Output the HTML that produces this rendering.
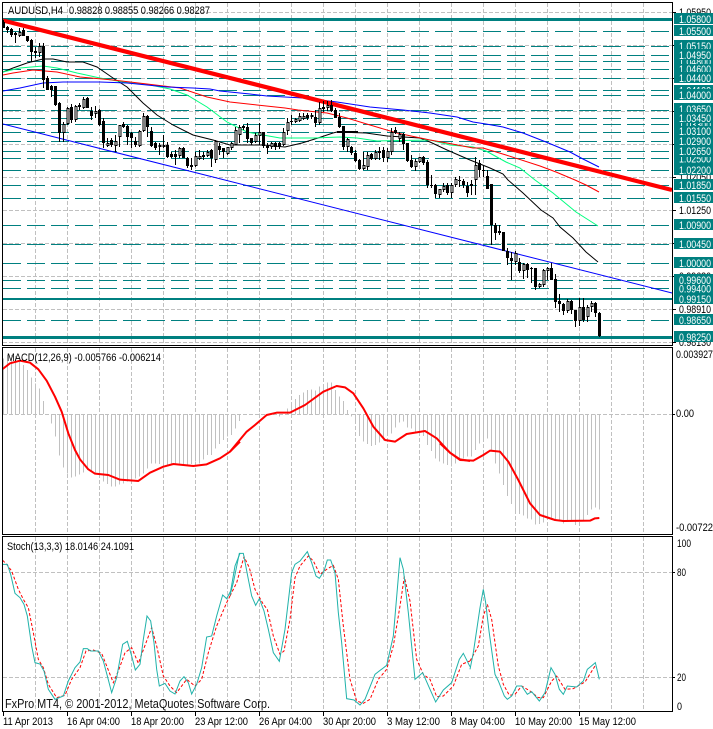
<!DOCTYPE html>
<html>
<head>
<meta charset="utf-8">
<title>AUDUSD,H4</title>
<style>
html,body{margin:0;padding:0;background:#fff;width:713px;height:729px;overflow:hidden}
svg{display:block}
text{font-family:"Liberation Sans",sans-serif;font-size:11px;fill:#000}
.g{stroke:#c0c0c0;stroke-width:1;stroke-dasharray:4 2;fill:none}
.t{stroke:#008080;stroke-width:1;stroke-dasharray:18 6;fill:none}
.l text{fill:#fff}
.l rect{fill:#008080}
</style>
</head>
<body>
<svg width="713" height="729" viewBox="0 0 713 729" xmlns="http://www.w3.org/2000/svg">
<rect width="713" height="729" fill="#fff"/>

<!-- grid -->
<g shape-rendering="crispEdges">
<path class="g" d="M35.5 3V345M67.5 3V345M99.5 3V345M131.5 3V345M163.5 3V345M195.5 3V345M227.5 3V345M259.5 3V345M291.5 3V345M323.5 3V345M355.5 3V345M387.5 3V345M419.5 3V345M451.5 3V345M483.5 3V345M515.5 3V345M547.5 3V345M579.5 3V345M611.5 3V345M643.5 3V345"/>
<path class="g" d="M3 12.5H672M3 45.5H672M3 78.5H672M3 111.5H672M3 144.5H672M3 177.5H672M3 210.5H672M3 243.5H672M3 276.5H672M3 309.5H672M3 342.5H672"/>
<path class="g" d="M35.5 348V534M67.5 348V534M99.5 348V534M131.5 348V534M163.5 348V534M195.5 348V534M227.5 348V534M259.5 348V534M291.5 348V534M323.5 348V534M355.5 348V534M387.5 348V534M419.5 348V534M451.5 348V534M483.5 348V534M515.5 348V534M547.5 348V534M579.5 348V534M611.5 348V534M643.5 348V534M3 414.5H672"/>
<path class="g" d="M35.5 537V712M67.5 537V712M99.5 537V712M131.5 537V712M163.5 537V712M195.5 537V712M227.5 537V712M259.5 537V712M291.5 537V712M323.5 537V712M355.5 537V712M387.5 537V712M419.5 537V712M451.5 537V712M483.5 537V712M515.5 537V712M547.5 537V712M579.5 537V712M611.5 537V712M643.5 537V712M3 572.5H672M3 677.5H672"/>
<!-- teal dashed levels -->
<path class="t" d="M3 31.5H672M3 46.5H672M3 55.5H672M3 61.5H672M3 69.5H672M3 78.5H672M3 90.5H672M3 95.5H672M3 110.5H672M3 118.5H672M3 124.5H672M3 132.5H672M3 141.5H672M3 151.5H672M3 158.5H672M3 170.5H672M3 185.5H672M3 198.5H672M3 225.5H672M3 244.5H672M3 263.5H672M3 280.5H672M3 288.5H672M3 320.5H672"/>
<rect x="3" y="18" width="669" height="3" fill="#008080"/>
<rect x="3" y="298" width="669" height="2" fill="#008080"/>
<rect x="3" y="336" width="669" height="3" fill="#008080"/>
</g>

<!-- moving averages -->
<g fill="none" stroke-width="1">
<polyline stroke="#000" points="3,72 13,68 27,63 43,59 53,59 67,62 83,62 97,67 113,78 127,87 143,103 157,115 173,125 193,135 213,140 230,145 263,145 285,147 302,143 318,138 333,133 337,132 366,133 387,136 420,138 430,142 447,150 470,160 490,168 503,174 508,180 523,193 541,210 553,218 560,227 573,238 586,252 598,262"/>
<polyline stroke="#000" stroke-width="2" points="337,132 358,132"/>
<polyline stroke="#00ff7f" points="3,72 20,68 43,66 57,68 77,73 100,78 123,82 150,85 170,89 187,95 207,107 227,122 247,132 263,135 280,138 313,138 340,137 357,138 377,141 430,140 450,145 473,147 486,151 506,162 520,168 535,180 553,193 576,212 598,226"/>
<polyline stroke="#f00" points="3,75 13,73 33,70 57,72 80,77 113,80 147,84 180,88 207,97 230,102 257,105 285,108 298,110 327,113 347,118 370,125 397,133 430,140 447,143 473,148 483,148 506,155 540,166 556,172 575,180 586,185 599,192"/>
<polyline stroke="#00f" points="3,91 20,88 43,83 63,82 100,82 127,83 167,87 193,88 210,89 220,91 250,94 267,96 303,98 337,102 370,107 403,110 430,113 457,117 473,122 486,124 503,127 523,133 546,142 570,152 583,159 599,167"/>
</g>

<!-- trend lines -->
<line x1="3" y1="124" x2="672" y2="293" stroke="#00f" stroke-width="1"/>
<line x1="3" y1="20.5" x2="672" y2="190" stroke="#f00" stroke-width="4.2"/>

<!-- candles -->
<g shape-rendering="crispEdges">
<path fill="none" stroke="#000" d="M3.5 20V28M7.5 26V33M11.5 28V37M15.5 32V43M19.5 28V37M23.5 28V36M27.5 36V42M31.5 39V62M35.5 47V58M39.5 43V57M43.5 43V88M47.5 76V90M51.5 85V97M55.5 86V106M59.5 102V142M63.5 122V142M67.5 107V125M71.5 104V123M75.5 105V122M79.5 103V110M83.5 97V109M87.5 97V108M91.5 107V120M95.5 106V118M99.5 109V126M103.5 118V148M107.5 138V147M111.5 138V147M115.5 135V152M119.5 125V147M123.5 122V128M127.5 125V145M131.5 132V148M135.5 137V147M139.5 130V147M143.5 113V132M147.5 115V137M151.5 127V147M155.5 142V150M159.5 143V155M163.5 135V148M167.5 142V158M171.5 152V158M175.5 150V165M179.5 147V158M183.5 147V158M187.5 157V168M191.5 158V170M195.5 152V167M199.5 150V160M203.5 152V160M207.5 150V157M211.5 149V167M215.5 140V163M219.5 143V155M223.5 148V158M227.5 147V155M231.5 142V150M235.5 127V145M239.5 125V143M243.5 125V130M247.5 123V143M251.5 138V145M255.5 133V143M259.5 123V145M263.5 132V148M267.5 143V154M271.5 142V149M275.5 142V150M279.5 142V149M283.5 128V146M287.5 118V135M291.5 115V125M295.5 118V123M299.5 113V122M303.5 113V120M307.5 113V120M311.5 113V119M315.5 110V127M319.5 102V125M323.5 101V112M327.5 101V111M331.5 100V112M335.5 108V118M339.5 113V128M343.5 126V150M347.5 138V152M351.5 146V155M355.5 150V162M359.5 159V170M363.5 152V170M367.5 152V170M371.5 153V160M375.5 150V160M379.5 147V160M383.5 147V162M387.5 148V162M391.5 128V155M395.5 127V134M399.5 132V142M403.5 133V150M407.5 143V162M411.5 155V168M415.5 159V171M419.5 157V163M423.5 156V165M427.5 160V188M431.5 175V188M435.5 184V198M439.5 189V198M443.5 183V192M447.5 183V195M451.5 183V198M455.5 177V187M459.5 176V187M463.5 179V188M467.5 182V197M471.5 180V195M475.5 157V195M479.5 160V177M483.5 165V177M487.5 170V189M491.5 184V245M495.5 223V240M499.5 225V235M503.5 232V251M507.5 248V265M511.5 252V280M515.5 251V265M519.5 258V273M523.5 263V279M527.5 263V278M531.5 267V283M535.5 268V290M539.5 283V288M543.5 269V287M547.5 267V280M551.5 263V280M555.5 274V308M559.5 294V312M563.5 303V315M567.5 299V313M571.5 300V314M575.5 310V327M579.5 298V326M583.5 298V322M587.5 305V322M591.5 301V312M595.5 302V317M599.5 312V337"/>
<path fill="none" stroke="#000" stroke-width="3" d="M3.5 22V28M7.5 27V30M11.5 29V35M15.5 33V35M23.5 30V36M27.5 36V41M31.5 40V52M35.5 51V53M43.5 46V80M47.5 78V90M51.5 86V90M55.5 86V105M59.5 103V133M71.5 107V120M79.5 105V107M87.5 98V108M91.5 111V116M99.5 110V125M103.5 121V143M111.5 140V145M123.5 124V127M127.5 126V137M131.5 133V138M135.5 141V145M147.5 116V127M151.5 131V146M155.5 143V148M167.5 145V157M171.5 154V157M175.5 154V157M183.5 148V158M187.5 158V166M191.5 165V167M203.5 155V157M211.5 150V158M219.5 146V150M223.5 148V152M243.5 126V128M247.5 127V139M251.5 138V143M263.5 132V146M267.5 146V148M275.5 143V147M279.5 143V147M291.5 121V122M307.5 115V118M315.5 117V123M323.5 107V109M331.5 105V111M335.5 110V118M339.5 117V127M343.5 126V147M351.5 147V153M355.5 153V161M359.5 160V169M371.5 154V159M379.5 151V153M383.5 150V158M395.5 130V133M403.5 134V144M407.5 143V161M411.5 160V167M423.5 157V163M427.5 162V185M431.5 185V186M435.5 185V194M447.5 185V193M459.5 180V181M463.5 181V185M467.5 186V193M471.5 184V186M479.5 163V170M483.5 170V171M487.5 176V189M491.5 184V225M495.5 225V233M499.5 231V233M503.5 232V251M507.5 251V258M511.5 258V261M519.5 262V271M527.5 264V270M531.5 268V269M535.5 268V287M551.5 268V280M555.5 279V302M559.5 301V304M563.5 304V311M571.5 301V310M575.5 310V321M583.5 307V320M595.5 303V313M599.5 313V336"/>
<path fill="#fff" stroke="#000" d="M19 32.5h2v3h-2zM39 46.5h2v6h-2zM63 124.5h2v8h-2zM67 108.5h2v15h-2zM75 106.5h2v13h-2zM83 99.5h2v8h-2zM95 111.5h2v2h-2zM107 143.5h2v2h-2zM115 141.5h2v4h-2zM119 125.5h2v11h-2zM139 131.5h2v14h-2zM143 116.5h2v14h-2zM159 145.5h2v1h-2zM163 145.5h2v1h-2zM179 148.5h2v7h-2zM195 156.5h2v9h-2zM199 156.5h2v2h-2zM207 152.5h2v3h-2zM215 141.5h2v18h-2zM227 147.5h2v6h-2zM231 143.5h2v4h-2zM235 130.5h2v14h-2zM239 127.5h2v7h-2zM255 135.5h2v6h-2zM259 132.5h2v3h-2zM271 143.5h2v3h-2zM283 132.5h2v12h-2zM287 122.5h2v8h-2zM295 119.5h2v2h-2zM299 116.5h2v4h-2zM303 116.5h2v2h-2zM311 115.5h2v1h-2zM319 108.5h2v14h-2zM327 105.5h2v2h-2zM347 139.5h2v7h-2zM363 165.5h2v3h-2zM367 155.5h2v11h-2zM375 152.5h2v6h-2zM387 151.5h2v6h-2zM391 132.5h2v19h-2zM399 134.5h2v4h-2zM415 161.5h2v5h-2zM419 157.5h2v4h-2zM439 189.5h2v5h-2zM443 186.5h2v3h-2zM451 185.5h2v7h-2zM455 179.5h2v5h-2zM475 165.5h2v14h-2zM515 253.5h2v8h-2zM523 264.5h2v6h-2zM539 284.5h2v2h-2zM543 270.5h2v14h-2zM547 268.5h2v2h-2zM567 301.5h2v9h-2zM579 307.5h2v13h-2zM587 307.5h2v9h-2zM591 303.5h2v3h-2z"/>
</g>

<!-- MACD histogram -->
<g fill="none" stroke="#c0c0c0" stroke-width="3" shape-rendering="crispEdges">
<path transform="translate(0,340) scale(.33333)" d="M10 222V55M22 222V45M34 222V45M46 222V48M58 222V60M70 222V75M82 222V90M94 222V113M106 222V130M118 222V145M130 222V183M154 222V250M166 222V290M178 222V347M190 222V383M202 222V400M214 222V413M226 222V410M238 222V403M250 222V398M262 222V390M274 222V395M286 222V400M298 222V405M310 222V425M322 222V432M334 222V440M346 222V440M358 222V433M370 222V430M382 222V425M394 222V420M406 222V415M418 222V410M430 222V400M442 222V385M454 222V370M466 222V370M478 222V372M490 222V380M502 222V375M514 222V372M526 222V370M538 222V370M550 222V372M562 222V375M574 222V372M586 222V365M598 222V370M610 222V358M622 222V345M634 222V345M646 222V325M658 222V312M670 222V300M682 222V290"/>
<path transform="translate(230,350) scale(.33333)" d="M4 193V255M16 193V235M28 193V213M88 193V190M148 193V200M172 193V175M184 193V160M196 193V147M208 193V135M220 193V128M232 193V120M244 193V118M256 193V122M268 193V110M280 193V105M292 193V97M304 193V97M316 193V120M328 193V140M340 193V153M352 193V180M364 193V200M376 193V220M388 193V258M400 193V275M412 193V282M424 193V288M436 193V285M448 193V278M460 193V272M472 193V250M484 193V250M496 193V232M508 193V218M520 193V215M532 193V232M544 193V235M556 193V248M568 193V248M580 193V258M592 193V285M604 193V303M616 193V325M628 193V335"/>
<path transform="translate(440,350) scale(.33333)" d="M10 193V340M22 193V345M34 193V350M46 193V340M58 193V330M70 193V325M82 193V320M94 193V320M106 193V300M118 193V280M130 193V270M142 193V265M154 193V300M166 193V340M178 193V370M190 193V405M202 193V438M214 193V462M226 193V480M238 193V492M250 193V497M262 193V505M274 193V508M286 193V523M298 193V522M310 193V518M322 193V510M334 193V510M346 193V510M358 193V510M370 193V520M382 193V515M394 193V515M406 193V525M418 193V515M430 193V513M442 193V495M454 193V478M466 193V472M478 193V478"/>
</g>

<!-- MACD signal -->
<g fill="none" stroke="#f00" stroke-width="6" stroke-linejoin="round">
<polyline transform="translate(0,340) scale(.33333)" points="8,87 30,70 60,62 90,68 115,88 140,122 165,170 185,215 205,280 225,330 240,358 265,388 285,401 325,405 360,419 415,423 450,398 490,380 520,372 580,378 620,373 660,355 690,335 720,305"/>
<polyline transform="translate(230,350) scale(.33333)" points="0,305 25,275 50,245 75,225 110,195 140,188 180,188 225,165 280,125 320,108 345,112 370,130 400,175 430,230 465,270 495,275 530,252 585,243 620,265 660,308 690,328 720,333"/>
<polyline transform="translate(440,350) scale(.33333)" points="0,280 30,308 60,330 100,332 130,315 150,302 180,305 205,335 235,390 270,460 300,495 345,510 370,513 450,512 465,505 478,504"/>
</g>

<!-- Stochastic -->
<g fill="none" stroke="#f00" stroke-width="3" stroke-dasharray="9 6">
<polyline transform="translate(0,536) scale(.33333)" points="8,73 20,85 35,105 55,160 70,190 85,215 100,290 115,370 130,395 145,445 170,485 195,478 215,430 240,395 258,345 280,342 305,352 322,395 340,440 355,405 375,350 395,335 415,382 440,315 455,275 470,330 490,420 510,450 530,470 560,430 585,450 605,430 625,350 650,270 680,200 690,180"/>
<polyline transform="translate(230,536) scale(.33333)" points="0,180 20,140 42,62 58,95 75,160 100,205 112,220 130,300 150,355 162,345 180,250 195,125 210,90 235,60 250,75 270,115 290,100 310,88 325,130 340,270 360,430 380,495 400,502 420,490 445,430 470,400 490,330 510,210 523,122 540,195 560,370 580,415 600,430 620,482 640,480 670,450 695,385 720,375"/>
<polyline transform="translate(470,536) scale(.33333)" points="0,375 25,330 40,240 52,205 65,250 85,390 100,445 118,478 135,475 155,450 180,465 205,485 220,485 245,435 260,420 285,460 310,458 345,438 375,390"/>
</g>
<g fill="none" stroke="#20b2aa" stroke-width="3">
<polyline transform="translate(0,536) scale(.33333)" points="8,85 22,85 32,115 45,172 60,185 72,205 82,240 95,330 105,380 120,384 132,405 145,460 165,490 190,480 205,435 225,395 240,378 250,338 262,338 272,345 295,345 310,375 322,420 335,470 350,425 368,325 382,316 395,360 406,402 420,385 430,310 441,240 452,255 462,320 470,400 478,450 495,442 510,465 525,474 540,435 552,422 565,440 575,474 590,445 605,395 620,303 635,300 650,240 668,177 680,188 692,165 705,90 720,52"/>
<polyline transform="translate(230,536) scale(.33333)" points="0,178 10,140 28,52 40,52 55,130 65,180 77,208 88,188 102,225 115,280 130,350 148,376 165,280 185,110 195,85 210,75 232,47 245,80 258,120 268,127 282,105 292,72 302,72 315,110 325,230 335,320 350,488 372,492 390,507 405,490 435,415 470,388 490,300 510,65 520,100 535,230 555,430 578,410 600,460 617,498 640,462 665,440 688,370 700,352 720,392"/>
<polyline transform="translate(470,536) scale(.33333)" points="0,400 10,350 30,215 40,160 47,200 57,285 75,415 85,435 103,480 112,490 125,480 140,450 155,450 172,475 185,467 208,495 225,470 243,395 255,415 268,460 280,475 292,450 320,453 340,435 352,400 362,392 376,380 388,430"/>
</g>

<!-- frames -->
<g fill="none" stroke="#000" shape-rendering="crispEdges">
<rect x="2.5" y="2.5" width="670" height="343"/>
<rect x="2.5" y="347.5" width="670" height="187"/>
<rect x="2.5" y="536.5" width="670" height="175"/>
<path d="M672 12.5h4M672 45.5h4M672 78.5h4M672 111.5h4M672 144.5h4M672 177.5h4M672 210.5h4M672 243.5h4M672 276.5h4M672 309.5h4M672 342.5h4M672 414.5h3M672 572.5h3M672 677.5h3M3.5 712v4M67.5 712v4M131.5 712v4M195.5 712v4M259.5 712v4M323.5 712v4M387.5 712v4M451.5 712v4M515.5 712v4M579.5 712v4"/>
</g>

<!-- overlay text -->
<text x="8" y="14" textLength="55" lengthAdjust="spacingAndGlyphs">AUDUSD,H4</text>
<text x="69" y="14" textLength="141" lengthAdjust="spacingAndGlyphs">0.98828 0.98855 0.98266 0.98287</text>
<text x="7" y="361" textLength="154" lengthAdjust="spacingAndGlyphs">MACD(12,26,9) -0.005766 -0.006214</text>
<text x="7" y="550" textLength="127" lengthAdjust="spacingAndGlyphs">Stoch(13,3,3) 18.0146 24.1091</text>
<text x="5" y="708" style="font-size:13px;fill:#111" textLength="265" lengthAdjust="spacingAndGlyphs">FxPro MT4, © 2001-2012, MetaQuotes Software Corp.</text>

<!-- right axis plain labels -->
<g>
<text x="679" y="16" textLength="32" lengthAdjust="spacingAndGlyphs">1.05950</text>
<text x="679" y="181" textLength="32" lengthAdjust="spacingAndGlyphs">1.02050</text>
<text x="679" y="214" textLength="32" lengthAdjust="spacingAndGlyphs">1.01250</text>
<text x="679" y="280" textLength="32" lengthAdjust="spacingAndGlyphs">0.99680</text>
<text x="679" y="313" textLength="32" lengthAdjust="spacingAndGlyphs">0.98910</text>
<text x="679" y="346" textLength="32" lengthAdjust="spacingAndGlyphs">0.98130</text>
<text x="676" y="358" textLength="37" lengthAdjust="spacingAndGlyphs">0.003927</text>
<text x="676" y="417" textLength="18" lengthAdjust="spacingAndGlyphs">0.00</text>
<text x="676" y="531" textLength="37" lengthAdjust="spacingAndGlyphs">-0.00722</text>
<text x="677" y="547" textLength="14" lengthAdjust="spacingAndGlyphs">100</text>
<text x="677" y="576" textLength="9" lengthAdjust="spacingAndGlyphs">80</text>
<text x="677" y="681" textLength="9" lengthAdjust="spacingAndGlyphs">20</text>
<text x="677" y="710" textLength="5" lengthAdjust="spacingAndGlyphs">0</text>
</g>

<!-- price tags -->
<g class="l">
<rect x="674" y="85" width="39" height="11"/><text x="679" y="94.5" textLength="32" lengthAdjust="spacingAndGlyphs">1.04100</text>
<rect x="674" y="56" width="39" height="11"/><text x="679" y="65.5" textLength="32" lengthAdjust="spacingAndGlyphs">1.04800</text>
<rect x="674" y="119" width="39" height="11"/><text x="679" y="128.5" textLength="32" lengthAdjust="spacingAndGlyphs">1.03300</text>
<rect x="674" y="153" width="39" height="11"/><text x="679" y="162.5" textLength="32" lengthAdjust="spacingAndGlyphs">1.02500</text>
<rect x="674" y="283" width="39" height="11"/><text x="679" y="292.5" textLength="32" lengthAdjust="spacingAndGlyphs">0.99400</text>
<rect x="674" y="13" width="39" height="11"/><text x="679" y="23" textLength="32" lengthAdjust="spacingAndGlyphs">1.05800</text>
<rect x="674" y="25" width="39" height="11"/><text x="679" y="35" textLength="32" lengthAdjust="spacingAndGlyphs">1.05500</text>
<rect x="674" y="40" width="39" height="11"/><text x="679" y="50" textLength="32" lengthAdjust="spacingAndGlyphs">1.05150</text>
<rect x="674" y="49" width="39" height="11"/><text x="679" y="59" textLength="32" lengthAdjust="spacingAndGlyphs">1.04950</text>
<rect x="674" y="64" width="39" height="11"/><text x="679" y="73" textLength="32" lengthAdjust="spacingAndGlyphs">1.04600</text>
<rect x="674" y="72" width="39" height="11"/><text x="679" y="82" textLength="32" lengthAdjust="spacingAndGlyphs">1.04400</text>
<rect x="674" y="89" width="39" height="11"/><text x="679" y="99" textLength="32" lengthAdjust="spacingAndGlyphs">1.04000</text>
<rect x="674" y="103" width="39" height="11"/><text x="679" y="113" textLength="32" lengthAdjust="spacingAndGlyphs">1.03650</text>
<rect x="674" y="112" width="39" height="11"/><text x="679" y="122" textLength="32" lengthAdjust="spacingAndGlyphs">1.03450</text>
<rect x="674" y="126" width="39" height="11"/><text x="679" y="135" textLength="32" lengthAdjust="spacingAndGlyphs">1.03100</text>
<rect x="674" y="135" width="39" height="11"/><text x="679" y="145" textLength="32" lengthAdjust="spacingAndGlyphs">1.02900</text>
<rect x="674" y="146" width="39" height="11"/><text x="679" y="155" textLength="32" lengthAdjust="spacingAndGlyphs">1.02650</text>
<rect x="674" y="164" width="39" height="11"/><text x="679" y="174" textLength="32" lengthAdjust="spacingAndGlyphs">1.02200</text>
<rect x="674" y="179" width="39" height="11"/><text x="679" y="189" textLength="32" lengthAdjust="spacingAndGlyphs">1.01850</text>
<rect x="674" y="192" width="39" height="11"/><text x="679" y="202" textLength="32" lengthAdjust="spacingAndGlyphs">1.01550</text>
<rect x="674" y="219" width="39" height="11"/><text x="679" y="229" textLength="32" lengthAdjust="spacingAndGlyphs">1.00900</text>
<rect x="674" y="238" width="39" height="11"/><text x="679" y="248" textLength="32" lengthAdjust="spacingAndGlyphs">1.00450</text>
<rect x="674" y="257" width="39" height="11"/><text x="679" y="267" textLength="32" lengthAdjust="spacingAndGlyphs">1.00000</text>
<rect x="674" y="274" width="39" height="11"/><text x="679" y="284" textLength="32" lengthAdjust="spacingAndGlyphs">0.99600</text>
<rect x="674" y="293" width="39" height="11"/><text x="679" y="303" textLength="32" lengthAdjust="spacingAndGlyphs">0.99150</text>
<rect x="674" y="314" width="39" height="11"/><text x="679" y="324" textLength="32" lengthAdjust="spacingAndGlyphs">0.98650</text>
<rect x="674" y="331" width="39" height="11"/><text x="679" y="341" textLength="32" lengthAdjust="spacingAndGlyphs">0.98250</text>
</g>

<!-- time axis -->
<g>
<text x="3" y="725" textLength="50" lengthAdjust="spacingAndGlyphs">11 Apr 2013</text>
<text x="67" y="725" textLength="53" lengthAdjust="spacingAndGlyphs">16 Apr 04:00</text>
<text x="131" y="725" textLength="53" lengthAdjust="spacingAndGlyphs">18 Apr 20:00</text>
<text x="195" y="725" textLength="53" lengthAdjust="spacingAndGlyphs">23 Apr 12:00</text>
<text x="259" y="725" textLength="53" lengthAdjust="spacingAndGlyphs">26 Apr 04:00</text>
<text x="323" y="725" textLength="53" lengthAdjust="spacingAndGlyphs">30 Apr 20:00</text>
<text x="387" y="725" textLength="53" lengthAdjust="spacingAndGlyphs">3 May 12:00</text>
<text x="451" y="725" textLength="54" lengthAdjust="spacingAndGlyphs">8 May 04:00</text>
<text x="515" y="725" textLength="57" lengthAdjust="spacingAndGlyphs">10 May 20:00</text>
<text x="579" y="725" textLength="57" lengthAdjust="spacingAndGlyphs">15 May 12:00</text>
</g>
</svg>
</body>
</html>
